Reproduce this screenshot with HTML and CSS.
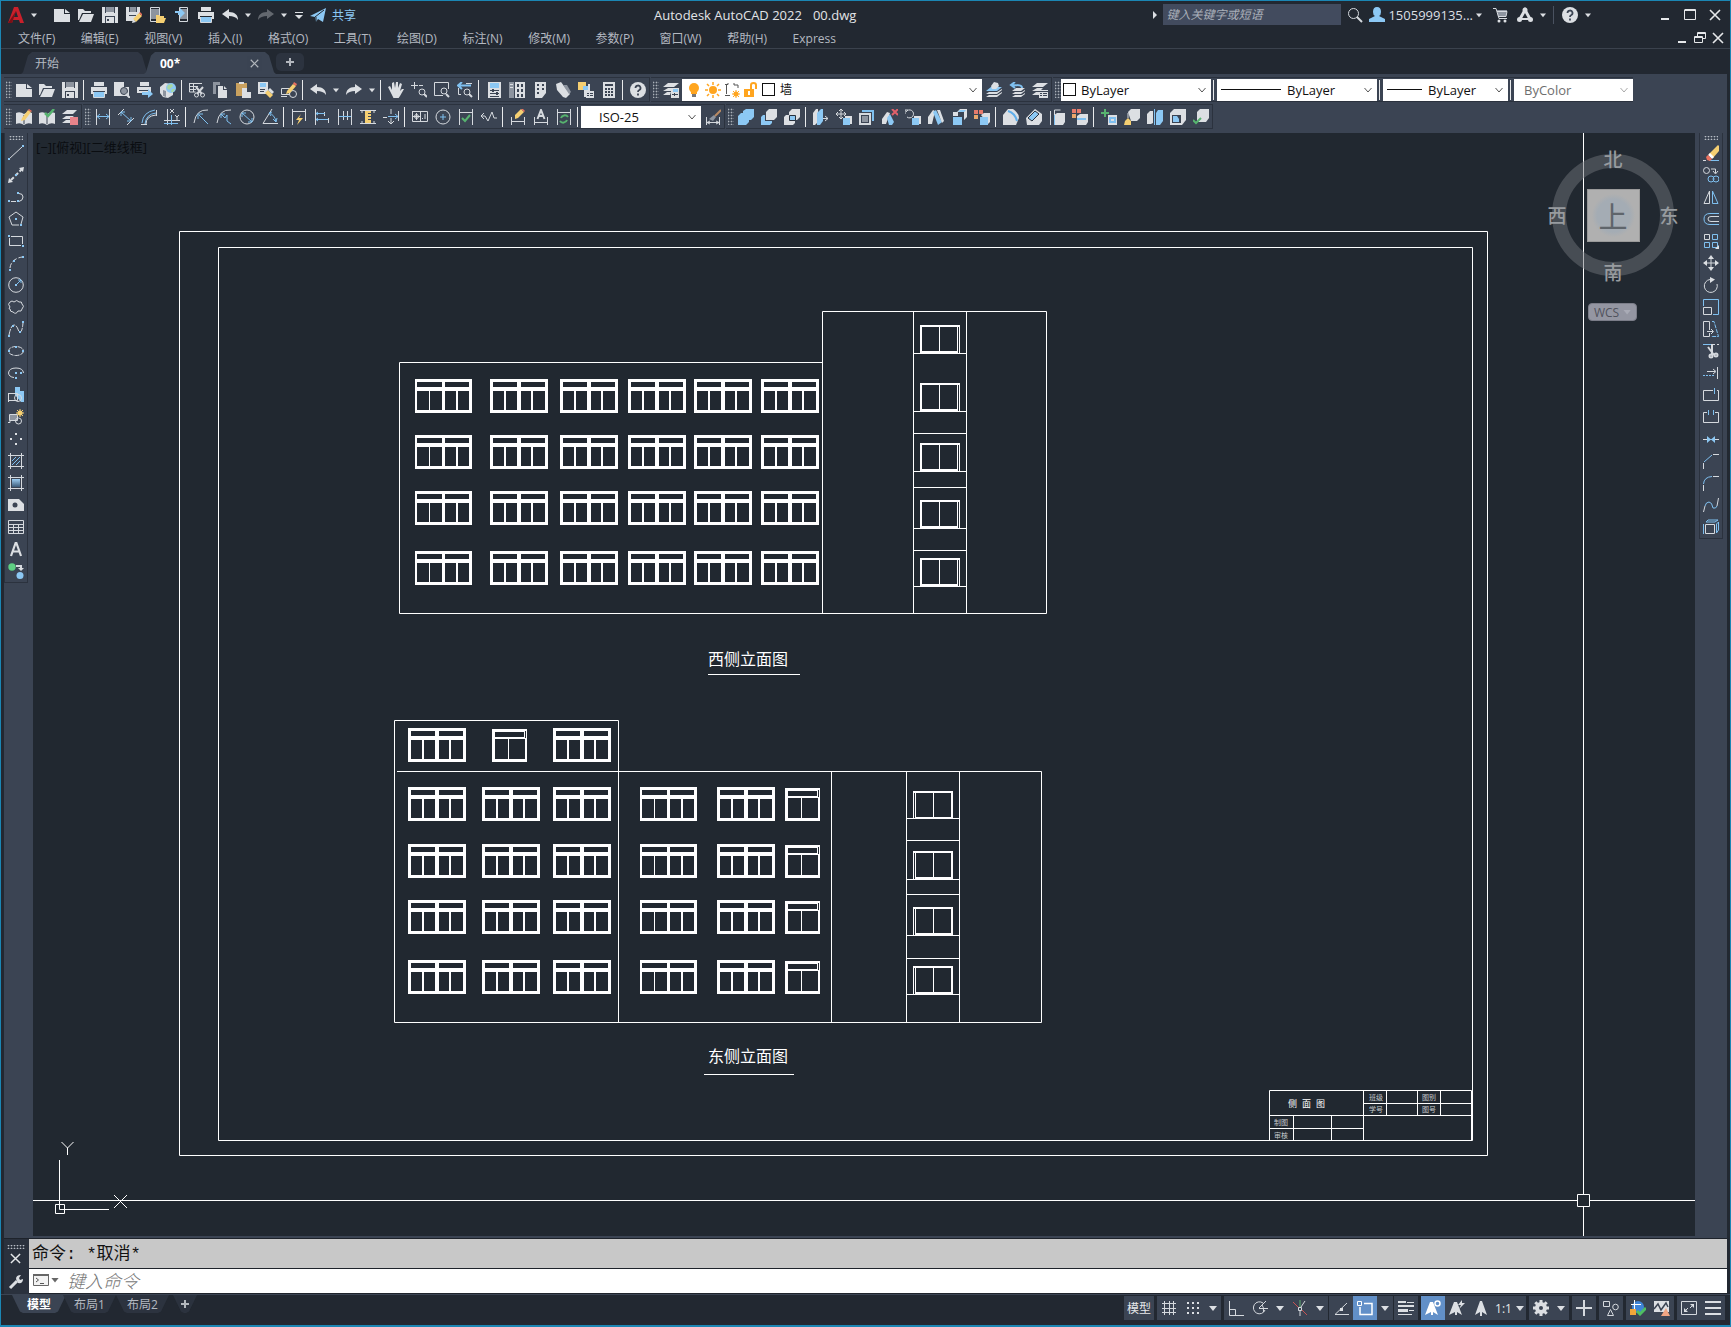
FILE: index.html
```
<!DOCTYPE html>
<html lang="zh-CN">
<head>
<meta charset="utf-8">
<title>Autodesk AutoCAD 2022 - 00.dwg</title>
<link rel="stylesheet" href="styles.css">
</head>
<body>
<svg class="sprite" aria-hidden="true">
<defs>
<!-- files -->
<symbol id="new" viewBox="0 0 16 16"><path class="fw" d="M0 2h10v5h6v8H0z"/><path class="fw" d="M11 2l5 4h-5z"/></symbol>
<symbol id="open" viewBox="0 0 16 16"><path class="fw" d="M0 2h5l2 2h6v2H4L1 13H0z"/><path class="fw" d="M5 7h11l-3 8H1z"/></symbol>
<symbol id="save" viewBox="0 0 16 16"><path class="fw" d="M0 0h16v16H0z"/><path class="fd" d="M3 0h1v6H3zM12 0h1v6h-1zM3 9h10v1H3zM3 9h1v7H3zM12 9h1v7h-1z"/><path class="fg" d="M4 0h8v5H4z"/><path class="fd" d="M5 12h2v2H5z"/></symbol>
<symbol id="saveas" viewBox="0 0 16 16"><path class="fw" d="M0 0h14v6l-6 8H0z"/><path class="fd" d="M3 0h1v5H3zM10 0h1v5h-1zM3 8h7v1H3z"/><path class="fg" d="M4 0h6v5H4z"/><path class="fy" d="M7 12l6-6 3 3-6 6z"/><path class="fr" d="M13 6l1-1 3 3-1 1z"/><path class="fw" d="M7 12l3 3-4 1z"/></symbol>
<symbol id="phoneopen" viewBox="0 0 16 16"><path class="sw" d="M.5.5h9v14h-9z"/><path class="fg" d="M1 2h8v10H1z"/><path class="fy" d="M6 8h3l1 1h4v2h2l-2 5H6z"/></symbol>
<symbol id="phonein" viewBox="0 0 16 16"><path class="sw" d="M5.500.500h8v14h-8z"/><path class="fg" d="M6 2h7v10H6z"/><path class="fb" d="M1 4h5V1l5 5-5 5V8H4V6H1z"/></symbol>
<symbol id="print" viewBox="0 0 16 16"><path class="fw" d="M3 0h10v4H3zM0 5h16v7h-2V9H2v3H0z"/><path class="fb" d="M3 10h10v5H3z"/><path class="sw" d="M2.500 10v5.500h11V10"/></symbol>
<symbol id="preview" viewBox="0 0 16 16"><path class="fw" d="M0 0h10v5h5v9H0z"/><circle class="mag" cx="10" cy="9" r="3.500"/><path class="sw2" d="M12 12l4 4"/></symbol>
<symbol id="publish" viewBox="0 0 16 16"><path class="fw" d="M3 0h9v4H3zM0 5h14v6H0z"/><path class="fd" d="M2 8h10v1H2z"/><path class="fb" d="M5 10h6V7l5 5-5 4v-3H5z"/></symbol>
<symbol id="globe" viewBox="0 0 16 16"><path class="fw" d="M0 5l5-4 8 1v11l-5 3-5-1-3-4z"/><circle cx="11" cy="6" r="5" class="fb"/><path fill="#a9d8a0" d="M8 3l4-1 1 2-2 2-2 2-2-2zM12 7l3 0-2 3-2 0z"/><path class="fg" d="M3 8l3 1v6l-3-1z"/></symbol>
<symbol id="cut" viewBox="0 0 16 16"><path class="sw" d="M.5 1v9h6M0 1.500h13M0 4.500h9M0 7.500h7M4.500 1v9"/><path class="sw2" d="M7 5l6 7M14 5l-6 7"/><circle class="sw" cx="7.500" cy="13" r="2"/><circle class="sw" cx="13.500" cy="13" r="2"/></symbol>
<symbol id="copyclip" viewBox="0 0 16 16"><path class="fg" d="M1 0h7v3H4v9H1z"/><path class="fw" d="M6 4h5v4h4v8H6zM12 4l3 3h-3z"/></symbol>
<symbol id="paste" viewBox="0 0 16 16"><path fill="#c9a15f" d="M1 1h11v13H1z"/><path class="fw" d="M4 0h5v2H4zM7 6h5v4h4v6H7z"/></symbol>
<symbol id="match" viewBox="0 0 16 16"><path class="fw" d="M0 0h10v12H0z"/><path class="fb" d="M2 1h6v4H2z"/><path class="fd" d="M2 7h5v1H2zM2 9h4v1H2z"/><path class="fy" d="M7 11l3-3 5 5-3 3z"/><path class="fw" d="M10 8l2-2 4 4-2 2z"/></symbol>
<symbol id="blockedit" viewBox="0 0 16 16"><path class="sw" d="M.5 6.500h8v6h-8zM0 14.500h6"/><circle class="sw" cx="12" cy="12" r="3.500"/><path class="fy" d="M6 9l6-7 3 2-6 7-4 1z"/><path class="fr" d="M12 2l1-2 3 2-1 2z"/></symbol>
<symbol id="undo" viewBox="0 0 16 16"><path class="fw" d="M0 7l7-5v3c6 0 9 3 9 8-2-3-5-4-9-4v3z"/></symbol>
<symbol id="redo" viewBox="0 0 16 16"><path class="fw" d="M16 7L9 2v3C3 5 0 8 0 13c2-3 5-4 9-4v3z"/></symbol>
<symbol id="dd" viewBox="0 0 8 16"><path class="fw" d="M0 6h8L4 11z"/></symbol>
<symbol id="pan" viewBox="0 0 16 16"><path class="fw" d="M0 5l2-1 2 4V1l2-1 1 6 1-6 2 0 0 6 2-5 2 1-2 7 2-2 2 0-4 7-2 3H6z"/></symbol>
<symbol id="zoom" viewBox="0 0 16 16"><path class="sw" d="M3.500 0v7M0 3.500h7M8 3.500h4"/><circle class="sw" cx="11" cy="10" r="3"/><path class="sw2" d="M13 12l3 3"/></symbol>
<symbol id="zoomwin" viewBox="0 0 16 16"><path class="sw" d="M9 13.500H.500v-13h14V7"/><circle class="sw" cx="10" cy="9" r="3"/><path class="sw2" d="M12 12l3 3"/></symbol>
<symbol id="zoomprev" viewBox="0 0 16 16"><path class="sw" d="M4 12.500h-2.500V6M9 1.500h6"/><path class="sb2" d="M2 3.500h12M5 0L1 3.500 5 7"/><circle class="sw" cx="10" cy="10" r="3"/><path class="sw2" d="M12 12l3 3"/></symbol>
<symbol id="props" viewBox="0 0 16 16"><path class="fw" d="M2 0h13v16H2z"/><path class="fb" d="M4 1h9v5H4z"/><path class="fd" d="M4 8h9v1H4zM4 11h9v1H4zM4 14h9v1H4zM6 7h2v3H6zM10 10h2v3h-2z"/></symbol>
<symbol id="dc" viewBox="0 0 16 16"><path class="fg" d="M0 0h5v16H0z"/><path class="fw" d="M6 0h10v16H6zM1 2h3v1H1zM1 5h3v1H1z"/><path class="fd" d="M8 2h2v3H8zM12 2h2v3h-2zM8 7h2v3H8zM12 7h2v3h-2zM8 12h2v3H8zM12 12h2v3h-2z"/></symbol>
<symbol id="palette" viewBox="0 0 16 16"><path class="fw" d="M3 0h11v11l-4 5H3z"/><path class="fd" d="M5 2h2v2H5zM10 2h2v2h-2zM5 6h2v2H5zM10 6h2v2h-2zM5 10h2v2H5z"/></symbol>
<symbol id="sheets" viewBox="0 0 16 16"><path class="fw" d="M1 2l5-2 9 12-4 4-3-1-6-7z"/><path class="fg" d="M8 3l4 0 4 7-2 2z"/></symbol>
<symbol id="markup" viewBox="0 0 16 16"><path class="fy" d="M0 0h8v8H0z"/><path class="fw" d="M6 6h5v9H6zM10 2h2v7h-2z"/><path class="fb" d="M5 4h5v4H5z"/><path class="fw" d="M8 9h8v7H8z"/><path class="fd" d="M9 11h2v1H9zM12 11h3v1h-3zM9 13h2v1H9zM12 13h3v1h-3z"/></symbol>
<symbol id="calc" viewBox="0 0 16 16"><path class="fw" d="M2 0h12v16H2z"/><path class="fd" d="M4 2h8v2H4zM4 6h2v2H4zM7 6h2v2H7zM10 6h2v2h-2zM4 9h2v2H4zM7 9h2v2H7zM10 9h2v2h-2zM4 12h2v2H4zM7 12h2v2H7zM10 12h2v2h-2z"/></symbol>
<symbol id="help" viewBox="0 0 16 16"><circle class="fw" cx="8" cy="8" r="8"/><path d="M5.500 6a2.500 2.500 0 1 1 3.500 2.300q-1 .5-1 1.700M8 11.500v2" fill="none" stroke="#3b4453" stroke-width="1.800"/></symbol>
<symbol id="layprop" viewBox="0 0 16 16"><path class="fw" d="M0 5l5-4h11l-5 4zM0 9l5-3h6l-3 3zM0 13l4-3h4l-1 3z"/><path class="fw" d="M8 6h8v10H8z"/><path class="fb" d="M10 7h5v3h-5z"/><path class="fd" d="M9 12h6v1H9zM11 11h1v3h-1z"/></symbol>
<symbol id="lay1" viewBox="0 0 16 16"><path class="fb" d="M0 9l5-4h11l-5 4z"/><path class="fw" d="M5 4l3-4 4 1 1 3-3 3-4 0zM0 12l3-2 8 0 5-3v1l-5 4zM0 15l3-2 8 0 5-3v1l-5 4z"/></symbol>
<symbol id="lay2" viewBox="0 0 16 16"><path class="sb2" d="M13 6c0-3-3-3-10-3M6 0L2 3l4 3"/><path class="fw" d="M3 9l4-3h9l-4 3zM3 12l3-2h7l3-2v1l-4 3zM3 15l3-2h7l3-2v1l-4 3z"/></symbol>
<symbol id="lay3" viewBox="0 0 16 16"><path class="fw" d="M0 5l5-4h11l-5 4zM0 9l5-3h6l-3 3zM0 13l4-3h3v3z"/><path class="fw" d="M7 8h9v8H7z"/><path class="fd" d="M7 9h9v1H7zM8 11h2v1H8zM11 11h4v1h-4zM8 13h2v1H8zM11 13h4v1h-4z"/></symbol>
<symbol id="bulb" viewBox="0 0 16 16"><circle cx="8" cy="6" r="5" fill="#ffa51f"/><path fill="#ffa51f" d="M5 9h6v3H5z"/><path fill="#777" d="M6 12h4v3H6z"/></symbol>
<symbol id="sun" viewBox="0 0 16 16"><circle cx="8" cy="8" r="4" fill="#ffa51f"/><path stroke="#ffa51f" stroke-width="1.500" d="M8 0v3M8 13v3M0 8h3M13 8h3M2 2l2 2M12 12l2 2M2 14l2-2M12 4l2-2"/></symbol>
<symbol id="vpfreeze" viewBox="0 0 16 16"><path fill="none" stroke="#555" d="M1 2.500h3V1M10 1v2h4v3M2.500 3v9M1 13.500h5"/><circle cx="12" cy="12" r="2.500" fill="#ffa51f"/><path stroke="#ffa51f" d="M12 8v8M8 12h8M9 9l6 6M9 15l6-6"/></symbol>
<symbol id="lock" viewBox="0 0 16 16"><path fill="#ffa51f" d="M1 7h10v8H1z"/><path fill="none" stroke="#ffa51f" stroke-width="2" d="M8 7V3q0-2 2.500-2T13 3v4"/><path fill="#fff" d="M5 9h2v4H5z"/></symbol>
<symbol id="chev" viewBox="0 0 16 16"><path fill="none" stroke="#555" d="M4.500 6l3.500 4 3.500-4"/></symbol>
<!-- reference editing -->
<symbol id="refedit" viewBox="0 0 16 16"><path class="fw" d="M0 4q4-2 8 1 4-3 8-1v11q-4-2-8 1-4-3-8-1z"/><path class="fd" d="M7.500 6h1v9h-1z"/><path class="fy" d="M6 9l6-8 3 2-6 8-4 1z"/><path class="fr" d="M12 1l1-1 3 2-1 1z"/></symbol>
<symbol id="refsave" viewBox="0 0 16 16"><path class="fw" d="M0 4q4-2 8 1 4-3 8-1v11q-4-2-8 1-4-3-8-1z"/><path class="fd" d="M7.500 6h1v9h-1z"/><path fill="none" stroke="#57b36f" stroke-width="2.500" d="M6 4l3 3 6-7"/></symbol>
<symbol id="refdel" viewBox="0 0 16 16"><path class="fw" d="M0 5l5-4h10l-4 4zM0 10l4-3h8l-4 3zM0 14l4-3h4v3z"/><path fill="#e7838a" d="M8 8h8v8H8z"/></symbol>
<!-- dimensions -->
<symbol id="dlin" viewBox="0 0 16 16"><path class="sw" d="M1.500 0v16M14.500 0v16"/><path class="sb" d="M2 7.500h12M5 5L2 7.500 5 10M11 5l3 2.500-3 2.500"/></symbol>
<symbol id="dali" viewBox="0 0 16 16"><path class="sw" d="M0 6l6-6M9 16l7-7"/><path class="sb" d="M3 3l10 9M3 7V3h4M9 12h4V8"/></symbol>
<symbol id="darc" viewBox="0 0 16 16"><path class="sw" d="M5 15q0-8 10-9M0 15.500h6M15.500 1v6"/><path class="sb" d="M1 14Q2 3 14 1M4 15q1-10 11-11"/></symbol>
<symbol id="dord" viewBox="0 0 16 16"><path class="sw" d="M3.500 0v16M0 11.500h16M6 0l4 4M10 0L6 4M11 6l2 2 2-2M13 8v3"/><path class="sb" d="M7.500 6v10M0 14.500h14"/></symbol>
<symbol id="drad" viewBox="0 0 16 16"><path class="sw" d="M15 1Q3 0 1 14"/><path class="sb" d="M6 6l9 9M5 10V5h5"/></symbol>
<symbol id="djog" viewBox="0 0 16 16"><path class="sw" d="M15 1Q3 0 1 14"/><path class="sb" d="M5 5l4 4 2-3 0 6 4 3M5 9V5h4"/></symbol>
<symbol id="ddia" viewBox="0 0 16 16"><circle class="sw" cx="8" cy="8" r="7"/><path class="sb" d="M3 4l10 9M3 8V4h4M9 13h4V9"/></symbol>
<symbol id="dang" viewBox="0 0 16 16"><path class="sw" d="M10 0L1 14.500h15"/><path class="sb" d="M7 4q6 2 7 9M10 3L7 4l2 3M11 10l3 3 1-4"/></symbol>
<symbol id="dquick" viewBox="0 0 16 16"><path class="sw" d="M1.500 0v16M14.500 0v12M2 2.500h12"/><path class="fy" d="M10 5L5 11h3l-2 5 6-7H8z"/></symbol>
<symbol id="dbase" viewBox="0 0 16 16"><path class="sw" d="M1.500 0v16M10.500 7v-4M14.500 9v5"/><path class="sb" d="M2 4.500h9M2 10.500h12M4 3L2 4.500 4 6M4 9l-2 1.500L4 12"/></symbol>
<symbol id="dcont" viewBox="0 0 16 16"><path class="sw" d="M1.500 0v16M6.500 2v9M10.500 2v9M14.500 0v16"/><path class="sb" d="M2 7.500h12"/></symbol>
<symbol id="dspace" viewBox="0 0 16 16"><path class="sw" d="M0 1.500h16M0 14.500h16M2 1v3M14 1v3M2 12v3M14 12v3"/><path class="fy" d="M5 2h6v12H5z"/><path class="fd" d="M8 4h3v1H8zM8 7h3v1H8zM8 10h3v1H8z"/></symbol>
<symbol id="dbreak" viewBox="0 0 16 16"><path class="sw" d="M8 0v5M8 9v6M5 12l3 3 3-3M15.500 2v10M0 8.500h4"/><path class="sb" d="M5 7.500h10M12 5l3 2.500-3 2.500"/></symbol>
<symbol id="dtol" viewBox="0 0 16 16"><path class="sw" d="M0 2.500h15.500v10H.5v-10M8.500 3v9M10 9.500h1M13 5v5"/><circle class="sw" cx="4.500" cy="7.500" r="2"/><path class="sw" d="M4.500 4v7M1 7.500h7"/></symbol>
<symbol id="dcen" viewBox="0 0 16 16"><circle class="sw" cx="8" cy="8" r="7"/><path class="sb" d="M8 5v6M5 8h6"/></symbol>
<symbol id="dinsp" viewBox="0 0 16 16"><path class="sw" d="M1.500 0v16M14.500 0v16M2 3.500h12"/><path fill="none" stroke="#57b36f" stroke-width="2" d="M4 9l3 3 5-6"/></symbol>
<symbol id="djline" viewBox="0 0 16 16"><path class="sw" d="M0 7h4M3 4L0 7l3 3M4 7l3 5 4-9 2 6h3"/></symbol>
<symbol id="dedit" viewBox="0 0 16 16"><path class="sw" d="M1.500 8v8M14.500 8v8M2 12.500h12"/><path class="fy" d="M5 6l6-6 3 3-6 6-3 1z"/><path class="fr" d="M11 0l1-1 3 3-1 1z"/></symbol>
<symbol id="dtext" viewBox="0 0 16 16"><path class="sw" d="M1.500 8v8M14.500 8v8M2 13.500h12"/><path class="sw2" d="M4.500 10L8 1l3.500 9M6 7h4"/></symbol>
<symbol id="dupd" viewBox="0 0 16 16"><path class="sw" d="M1.500 0v16M14.500 0v16M2 3.500h12"/><path fill="none" stroke="#57b36f" stroke-width="2" d="M12 8a4 4 0 0 0-7 1M4 12a4 4 0 0 0 7-1"/></symbol>
<symbol id="dstyle" viewBox="0 0 16 16"><path class="sw" d="M1.500 8v8M14.500 8v8M2 13.500h12M5 12l-3 1.500L5 15M11 12l3 1.500-3 1.500"/><path class="fg" d="M4 10l5-4 2 2-3 4z"/><path stroke="#b98a62" stroke-width="2" d="M10 7l6-6"/></symbol>
<!-- solids -->
<symbol id="union" viewBox="0 0 16 16"><path class="fb" d="M5 4V2l3-2h8v8l-3 3h-2v2l-3 3H0V7l3-3z"/></symbol>
<symbol id="subtract" viewBox="0 0 16 16"><path class="fw" d="M5 3l3-3h8v8l-3 3H5z"/><path class="fb" d="M0 8l2-2h2v6h7v2l-2 2H0z"/></symbol>
<symbol id="intersect" viewBox="0 0 16 16"><path class="fw" d="M5 3l3-3h8v8l-3 3h-2v3l-2 2H0V8l2-2h3z"/><path class="fb" stroke="#28303c" d="M5.500 6.500h6v5h-6z"/></symbol>
<symbol id="extrude" viewBox="0 0 16 16"><path class="fw" d="M0 4l3-4h2v13l-3 3H0z"/><path class="fb" d="M4 4l4-4h2v12l-3 4H4z"/><path class="sw" d="M10 9.500h5M12 7l3 2.500-3 2.500"/></symbol>
<symbol id="moveface" viewBox="0 0 16 16"><path class="sw" d="M5 0v10M0 5h10M3 2l2-2 2 2M3 8l2 2 2-2M2 3L0 5l2 2M8 3l2 2-2 2"/><path class="fw" d="M9 7h7v8h-2V9H9z"/><path class="fb" d="M7 9h7v7H7z"/></symbol>
<symbol id="offsetface" viewBox="0 0 16 16"><path class="sw2" d="M1 5h10v10H1z"/><path class="fg" d="M3 7h6v6H3z"/><path class="sb2" d="M3 2h11v10"/></symbol>
<symbol id="delface" viewBox="0 0 16 16"><path class="fw" d="M0 10l5-7 3 1-4 11H0z"/><path class="fb" d="M5 9l3-4 4 8-2 3H7z"/><path stroke="#e0606a" stroke-width="2" d="M10 0l6 6M16 0l-6 6"/></symbol>
<symbol id="rotface" viewBox="0 0 16 16"><path class="sw" d="M3 1H0v4M1 3a4 4 0 1 1 1 5"/><path class="fw" d="M9 7h7v8h-2V9H9z"/><path class="fb" d="M7 9h7v7H7z"/></symbol>
<symbol id="taper" viewBox="0 0 16 16"><path class="fw" d="M0 8l5-7 2 1-3 13H0z"/><path class="fb" d="M5 3l3-2 6 12-4 3z"/><path class="fw" d="M9 1h3l4 11-2 2z"/></symbol>
<symbol id="copyface" viewBox="0 0 16 16"><path class="fb" d="M2 8h9v8H2z"/><path class="fw" d="M2 3h5v4H2zM6 3l3-3h7v8l-3 3V3z"/><path class="fb" d="M7 3l2-2h6l-2 2z"/></symbol>
<symbol id="colorface" viewBox="0 0 16 16"><path fill="#e77b6c" d="M0 1h4v4H0zM5 1h4v4H5z"/><path fill="#e9a76c" d="M0 6h4v4H0z"/><path class="fw" d="M7 6l3-2h6v9l-2 2z"/><path class="fb" d="M6 8h8v8H6z"/></symbol>
<symbol id="fillet3" viewBox="0 0 16 16"><path class="fw" d="M0 6l5-6h5q6 4 6 9l-3 7H0z"/><path fill="none" stroke="#5faeea" stroke-width="2" d="M5 2q7 2 9 10"/></symbol>
<symbol id="chamfer3" viewBox="0 0 16 16"><path class="fw" d="M0 9l9-9 7 5v7l-3 4H1z"/><path class="fb" stroke="#28303c" d="M2 9l7-7 4 3-7 7z"/></symbol>
<symbol id="copyedge" viewBox="0 0 16 16"><path class="sw" d="M1.500 2v14M5.500 6V1h6"/><path class="fw" d="M5 6l3-2h8v9l-2 3H5z"/><path class="sb" d="M5.500 6v10"/></symbol>
<symbol id="coloredge" viewBox="0 0 16 16"><path fill="#e77b6c" d="M0 0h4v4H0zM5 0h4v4H5z"/><path fill="#e9a76c" d="M0 5h4v4H0z"/><path class="fw" d="M5 7l3-2h8v8l-2 3H5z"/><path class="sb2" d="M5 10h9"/></symbol>
<symbol id="imprint" viewBox="0 0 16 16"><path fill="none" stroke="#57b36f" stroke-width="2" d="M4 0v8M0 4h8"/><path class="fw" d="M7 6h9v10H7z"/><path class="sb2" d="M9 9h5v4H9z"/></symbol>
<symbol id="clean" viewBox="0 0 16 16"><path class="fw" d="M4 3l3-3h9v9l-3 3H7z"/><path class="fy" d="M1 12l3-3 3 3v4H0z"/><path class="sw" d="M4 9V4"/></symbol>
<symbol id="separate" viewBox="0 0 16 16"><path class="fw" d="M0 5l3-3h3v12l-2 1H0z"/><path class="sb" d="M7.500 0v16"/><path class="fb" d="M9 4l2-3h5v11l-3 4H9z"/></symbol>
<symbol id="shell" viewBox="0 0 16 16"><path class="fw" d="M0 4l4-4h12v11l-4 5H0z"/><path class="fd" d="M2 6h9v8H2z"/><path class="fb" d="M3 7h4l2 3v3H3z"/></symbol>
<symbol id="check3" viewBox="0 0 16 16"><path class="fw" d="M4 3l3-3h9v9l-3 4H4z"/><path fill="none" stroke="#57b36f" stroke-width="2" d="M0 11l3 3 5-5"/></symbol>
<!-- draw -->
<symbol id="line" viewBox="0 0 16 16"><path class="sw" d="M1 14L14 2"/><path class="fb" d="M0 13h2v2H0zM14 0h2v2h-2z"/></symbol>
<symbol id="xline" viewBox="0 0 16 16"><path class="sw2" d="M3 13L14 2" stroke-dasharray="4 2"/><path class="fw" d="M0 16l1-5 4 4zM16 0l-5 1 4 4z"/><path class="fb" d="M7 7h2v2H7z"/></symbol>
<symbol id="pline" viewBox="0 0 16 16"><path class="sw" d="M3 12.500h5M11 4.500q4 0 4 3.500t-4 4.500"/><path class="fb" d="M0 11h2v2H0zM9 3h2v2H9zM9 11h2v2H9z"/></symbol>
<symbol id="polygon" viewBox="0 0 16 16"><path class="sw" d="M11 14H4L1 6l7-5 7 5-2 7"/><path class="fb" d="M7 7h2v2H7zM12 13h2v2h-2z"/></symbol>
<symbol id="rect" viewBox="0 0 16 16"><path class="sw" d="M3 3.500h11.500V11M1.500 5v7.500H13"/><path class="fb" d="M0 2h2v2H0zM14 12h2v2h-2z"/></symbol>
<symbol id="arc" viewBox="0 0 16 16"><path class="sw" d="M2 13Q3 4 14 2" stroke-dasharray="5 2"/><path class="fb" d="M1 14h2v2H1zM5 5h2v2H5zM14 1h2v2h-2z"/></symbol>
<symbol id="circle" viewBox="0 0 16 16"><circle class="sw" cx="8" cy="8" r="7.300"/><path class="sb" d="M9 7l4-4M10 3h3v3"/><path class="fb" d="M7 7h2v2H7z"/></symbol>
<symbol id="cloud" viewBox="0 0 16 16"><path class="sw" d="M2 8Q-1 5 2 3q2-2 4 0 3-3 5 0 3-1 3 2 3 2 0 5 0 3-4 2-2 4-5 1-3 0-3-3-2 0 0-2z"/></symbol>
<symbol id="spline" viewBox="0 0 16 16"><path class="sw" d="M1 14Q3 4 6 4t5 7q3 2 4-9" stroke-dasharray="6 1"/><path class="fb" d="M0 14h2v2H0zM4 4h2v2H4zM11 10h2v2h-2zM14 0h2v2h-2z"/></symbol>
<symbol id="ellipse" viewBox="0 0 16 16"><ellipse class="sw" cx="8" cy="8" rx="7.500" ry="4.500" stroke-dasharray="5 1"/><path class="fb" d="M0 7h2v2H0zM7 3h2v2H7zM14 7h2v2h-2z"/></symbol>
<symbol id="ellarc" viewBox="0 0 16 16"><path class="sw" d="M6 12.500Q1 12 .5 8 1 3 8 3t7.500 5"/><path class="fb" d="M7 7h2v2H7zM7 12h2v2H7zM12 7h2v2h-2z"/></symbol>
<symbol id="insert" viewBox="0 0 16 16"><path class="fb" d="M7 0h5v4h4v11h-3L7 8z"/><path class="sw" d="M.5 6.500h9v7H1M.5 6v9"/><circle class="sw" cx="10" cy="11" r="3.500"/></symbol>
<symbol id="block" viewBox="0 0 16 16"><path class="sw" d="M1.500 5.500h8v6h-8zM0 13.500h2v-2"/><path class="fg" d="M2 6h7v5H2z"/><circle class="sw" cx="10.500" cy="12" r="3"/><circle class="fy" cx="12" cy="4" r="2.500"/><path stroke="#f5cf72" d="M12 0v8M8 4h8M9 1l6 6M15 1L9 7"/></symbol>
<symbol id="point" viewBox="0 0 16 16"><path class="fw" d="M7 2h2v2H7zM2 7h2v2H2zM12 7h2v2h-2zM7 12h2v2H7z"/></symbol>
<symbol id="hatch" viewBox="0 0 16 16"><path class="sw" d="M0 2.500h16M0 13.500h16M2.500 0v16M13.500 0v16"/><path class="sb" d="M4 8l4-4M4 12l8-8M8 12l4-4"/></symbol>
<symbol id="gradient" viewBox="0 0 16 16"><path class="sw" d="M0 2.500h16M0 13.500h16M2.500 0v16M13.500 0v16"/><path fill="url(#gr)" d="M4 4h8v8H4z"/></symbol>
<symbol id="region" viewBox="0 0 16 16"><path class="fw" d="M0 2h11l5 5v7H0z"/><circle class="fd" cx="7" cy="8" r="2.500"/></symbol>
<symbol id="table" viewBox="0 0 16 16"><path class="sw" d="M.5 1.500h15v13H.500zM0 5.500h16M0 8.500h16M0 11.500h16M5.500 5v9M10.500 5v9"/></symbol>
<symbol id="mtext" viewBox="0 0 16 16"><path fill="none" stroke="#dcdfe3" stroke-width="2.200" d="M3 15L7.600 2h.8L13 15M5 10.500h6"/></symbol>
<symbol id="addsel" viewBox="0 0 16 16"><circle cx="4" cy="4" r="3.700" fill="#5fd083"/><circle class="fb" cx="12" cy="12.500" r="3.500"/><path class="sw2" d="M8 3h5v3"/><path class="fw" d="M10 5h6l-3 3z"/></symbol>
<!-- modify -->
<symbol id="erase" viewBox="0 0 16 16"><path class="sb" d="M6 15.500h10"/><path class="sw" d="M0 15.500h3"/><path class="fy" d="M6 9l9-9 1 1v5l-6 7z"/><path fill="#fff" d="M5 10l2-2 4 4-2 2z"/><path class="fr" d="M3 12l2-2 4 4-2 2-3-1z"/></symbol>
<symbol id="copy" viewBox="0 0 16 16"><circle class="sw" cx="3.500" cy="3.500" r="3"/><circle class="sb" cx="8" cy="12" r="3"/><circle class="sb" cx="13" cy="12" r="3"/><path class="sw" d="M8 2h4.500v4M10 4l2.500 3L15 4"/></symbol>
<symbol id="mirror" viewBox="0 0 16 16"><path class="sw" d="M1 14.500L6.500 2v12.500z"/><path class="sb" d="M9.500 14.500V2L15 14.500z"/></symbol>
<symbol id="offset" viewBox="0 0 16 16"><path class="sb" d="M16 2.500H7q-6 0-6 5.500t6 5.500h9"/><path class="sw" d="M16 5.500H8q-3 0-3 2.500t3 2.500h8"/></symbol>
<symbol id="array" viewBox="0 0 16 16"><path class="sw" d="M1.500 1.500h5v5h-5z"/><path class="sb" d="M9.500 1.500h5v5h-5zM1.500 9.500h5v5h-5zM9.500 9.500h5v5h-5z"/><path class="fw" d="M16 12v4h-4z"/></symbol>
<symbol id="move" viewBox="0 0 16 16"><path class="sw" d="M8 2v12M2 8h12"/><path class="fw" d="M8 0l3 4H5zM8 16l3-4H5zM0 8l4-3v6zM16 8l-4-3v6z"/></symbol>
<symbol id="rotate" viewBox="0 0 16 16"><path class="sw" d="M7 2.500a6.500 6.500 0 1 0 7 4.500"/><path class="fw" d="M7 0l5 2.500L7 6z"/></symbol>
<symbol id="scale" viewBox="0 0 16 16"><path class="sb" d="M.5 7V.500h15v15H10"/><path class="sw" d="M.5 8.500h8v7h-8z"/></symbol>
<symbol id="stretch" viewBox="0 0 16 16"><path class="sw" d="M6.500 9V.500h-6v15h6V12M4 10.500h6M8 8l2.500 2.500L8 13"/><path class="sb" d="M9 .5h2l4.500 15H8" stroke-dasharray="4 1"/></symbol>
<symbol id="trim" viewBox="0 0 16 16"><path class="sb" d="M0 1.500h8"/><path class="sw" d="M10 1.500h6" stroke-dasharray="2 2"/><path class="sw2" d="M5 4l6 8M9 1v11"/><circle class="sw2" cx="8" cy="13" r="1.500"/><circle class="sw2" cx="13" cy="12" r="1.500"/></symbol>
<symbol id="extend" viewBox="0 0 16 16"><path class="sw" d="M14.500 2v12M4 6.500h8M10 4l3 2.500L10 9"/><path class="sb" d="M0 10.500h12" stroke-dasharray="2 1"/></symbol>
<symbol id="breakpt" viewBox="0 0 16 16"><path class="sw" d="M10 3.500H.500v10h15v-10H14"/><path class="sb" d="M11.500 1v6"/></symbol>
<symbol id="break" viewBox="0 0 16 16"><path class="sw" d="M4 3.500H.500v10h15v-10H12"/><path class="sb" d="M5.500 1v5M10.500 1v5"/></symbol>
<symbol id="join" viewBox="0 0 16 16"><path class="sw" d="M0 8.500h4M12 8.500h4"/><path class="sb" d="M4 8.500h8"/><path class="fb" d="M4 5l4 3.500L4 12zM12 5L8 8.500l4 3.500z"/></symbol>
<symbol id="chamfer" viewBox="0 0 16 16"><path class="sw" d="M10 1.500h6M.5 10v6"/><path class="sb" d="M1 9l8-7"/></symbol>
<symbol id="fillet" viewBox="0 0 16 16"><path class="sw" d="M10 1.500h6M.5 10v6"/><path class="sb" d="M.5 9Q1 2 9 1.500"/></symbol>
<symbol id="blend" viewBox="0 0 16 16"><path class="sw" d="M.5 15L2 9M15.500 1L14 9"/><path class="sb" d="M2 9q1-4 4-4t4 6q3 1 4-2"/></symbol>
<symbol id="explode" viewBox="0 0 16 16"><path class="sb" d="M.5 15V5M3 3l2-2h10l-3 2zM13.500 14V5l2-2v8z"/><path class="sw" d="M2.500 5.500h9v9h-9z"/></symbol>
<!-- title and status -->
<symbol id="brand" viewBox="0 0 16 16"><path fill="#c9202b" fill-rule="evenodd" d="M0 16L6 0h4l6 16h-4l-1-3H5l-1 3zM6 10h4L8 4z"/><path fill="#7d1017" d="M8 4L5 13 4 16H0z"/></symbol>
<symbol id="custom" viewBox="0 0 8 16"><path class="fw" d="M0 5h8v1H0zM0 8h8l-4 4z"/></symbol>
<symbol id="share" viewBox="0 0 16 16"><path class="fb" d="M0 9L16 1l-3 14-5-3-2 3-1-5z"/><path stroke="#222831" d="M5 10l9-7M6 10v5"/></symbol>
<symbol id="tri" viewBox="0 0 8 16"><path class="fw" d="M2 4l4 4-4 4z"/></symbol>
<symbol id="search" viewBox="0 0 16 16"><circle class="sw" cx="6.500" cy="6.500" r="5"/><path class="sw2" d="M10 10l5 5"/></symbol>
<symbol id="user" viewBox="0 0 16 16"><path class="fb" d="M4 5q0-5 4-5t4 5q0 3-2 4l6 3v3H0v-3l6-3Q4 8 4 5z"/></symbol>
<symbol id="cart" viewBox="0 0 16 16"><path class="fg" d="M4 3h10l-1 7H5z"/><path class="sw" d="M0 1.500h3l3 10h8M4 4.500h10l-1 5H5"/><circle class="fw" cx="6" cy="14" r="1.500"/><circle class="fw" cx="12" cy="14" r="1.500"/></symbol>
<symbol id="store" viewBox="0 0 16 16"><path fill="none" stroke="#dcdfe3" stroke-width="3" d="M3 12L8 3l5 9"/><path fill="none" stroke="#dcdfe3" stroke-width="2" d="M3 12h10"/><circle class="fw" cx="8" cy="3" r="2.500"/><circle class="fw" cx="2.500" cy="12.500" r="2.500"/><circle class="fw" cx="13.500" cy="12.500" r="2.500"/></symbol>
<symbol id="min" viewBox="0 0 12 12"><path fill="#e6e8ea" d="M2 9h8v2H2z"/></symbol>
<symbol id="max" viewBox="0 0 12 12"><path fill="none" stroke="#e6e8ea" d="M.5 1v9.500h11V.500H.5M0 1.500h12"/></symbol>
<symbol id="restore" viewBox="0 0 12 12"><path fill="none" stroke="#e6e8ea" d="M3.500 4V.500h8v6H9M3 1.500h9M.5 4.500h8v6h-8zM0 5.500h9"/></symbol>
<symbol id="close" viewBox="0 0 12 12"><path stroke="#e6e8ea" stroke-width="1.600" d="M1 1l10 10M11 1L1 11"/></symbol>
<symbol id="plus" viewBox="0 0 12 12"><path class="sw2" d="M6 2v8M2 6h8"/></symbol>
<symbol id="wrench" viewBox="0 0 16 16"><path fill="none" stroke="#dcdfe3" stroke-width="3" d="M2 14l7-7"/><path class="fw" d="M8 5q0-4 5-4l-2 3 1 2 3-1q0 5-5 4z"/></symbol>
<symbol id="prompt" viewBox="0 0 16 16"><path fill="#f2f2f2" stroke="#666" d="M.5 2.500h15v11H.500z"/><path fill="#666" d="M0 2h16v2H0z"/><path fill="none" stroke="#555" d="M3 6l2.500 2L3 10M7 11.500h4"/></symbol>
<symbol id="grid" viewBox="0 0 16 16"><path class="sw" d="M3.500 1v14M8.500 1v14M12.500 1v14M1 3.500h14M1 8.500h14M1 12.500h14"/></symbol>
<symbol id="snap" viewBox="0 0 16 16"><path class="fw" d="M2 2h2v2H2zM7 2h2v2H7zM12 2h2v2h-2zM2 7h2v2H2zM7 7h2v2H7zM12 7h2v2h-2zM2 12h2v2H2zM7 12h2v2H7zM12 12h2v2h-2z"/></symbol>
<symbol id="ortho" viewBox="0 0 16 16"><path class="sw" d="M1.500 1v14.500H16M2 9.500h5.500V15"/></symbol>
<symbol id="polar" viewBox="0 0 16 16"><path class="sw" d="M11 3a6 6 0 1 0 2 7M7 8.500h9M7 8l7-7M10 5q2 2 1.500 7"/></symbol>
<symbol id="iso" viewBox="0 0 16 16"><path stroke="#c95353" d="M1 2l6 6M9 9l6 6"/><path stroke="#5fae6e" d="M8 0v7"/><path class="sw" d="M8 10v6M13 1L9 7M6.500 7.500h3v3h-3z"/></symbol>
<symbol id="otrack" viewBox="0 0 16 16"><path class="sw" d="M14 3L2 14.500h14"/><path class="fw" d="M7 8h3v3H7z"/></symbol>
<symbol id="osnap" viewBox="0 0 16 16"><path fill="none" stroke="#fff" stroke-width="1.500" d="M7 3.500h8v11H3V7"/><path fill="none" stroke="#fff" d="M.5 1.500h4v4h-4z"/></symbol>
<symbol id="lwt" viewBox="0 0 16 16"><path class="fw" d="M0 1h8v2H0zM9 2h7v1H9zM0 5h16v2H0zM0 9h10v3H0zM0 14h14v1H0zM11 10h5v1h-5z"/></symbol>
<symbol id="anno" viewBox="0 0 16 16"><path class="fw" d="M7 1h2l5 14-5-3v4H7v-4l-5 3z"/></symbol>
<symbol id="annovis" viewBox="0 0 16 16"><path fill="#fff" d="M5 2h3l5 13-5-3v3H6v-3l-6 3z"/><circle cx="12.500" cy="3.500" r="2.500" fill="#6290c8" stroke="#fff" stroke-width="1.500"/></symbol>
<symbol id="annoauto" viewBox="0 0 16 16"><path class="fw" d="M5 2h3l5 13-5-3v3H6v-3l-6 3z"/><path class="fw" d="M13 0l-4 5h3l-2 4 6-6h-3z"/></symbol>
<symbol id="gear" viewBox="0 0 16 16"><circle cx="8" cy="8" r="4" fill="none" stroke="#dcdfe3" stroke-width="4"/><path stroke="#dcdfe3" stroke-width="3" d="M8 0v3M8 13v3M0 8h3M13 8h3M2.300 2.300l2 2M11.700 11.700l2 2M2.300 13.700l2-2M11.700 4.300l2-2"/></symbol>
<symbol id="addst" viewBox="0 0 16 16"><path class="sw2" d="M8 0v16M0 8h16"/></symbol>
<symbol id="isolate" viewBox="0 0 16 16"><path class="sw" d="M.5 1.500h6v5h-6zM4.500 15.500h6l-3-6z"/><circle class="sw" cx="12.500" cy="7" r="2.800"/></symbol>
<symbol id="hw" viewBox="0 0 16 16"><circle cx="8" cy="7" r="6" fill="#3f84d6"/><path fill="#fff" d="M4 0h1v10H4zM1 4h10v1H1z"/><path fill="#f0a63a" d="M0 9h6v6H0z"/><path fill="none" stroke="#4fbf62" stroke-width="3" d="M7 11l3 3 6-6"/></symbol>
<symbol id="perf" viewBox="0 0 16 16"><path class="fw" d="M0 1h15v11H0z"/><path fill="none" stroke="#3b4453" stroke-width="1.500" d="M0 9l4-5 3 6 5-7 2 4"/><path fill="#f0a583" d="M7 16l5-8 4 8z"/></symbol>
<symbol id="full" viewBox="0 0 16 16"><path class="sw" d="M.5 1.500h15v13H.500z"/><path class="fw" d="M9 4h4v4zM3 12V8l4 4z"/><path class="sw" d="M9 8l3-3M4 11l3-3"/></symbol>
<symbol id="menu" viewBox="0 0 16 16"><path class="fw" d="M0 1h16v2H0zM0 7h16v2H0zM0 13h16v2H0z"/></symbol>
<linearGradient id="gr" x2="0" y2="1"><stop offset="0" stop-color="#9ccdf2"/><stop offset="1" stop-color="#3b5a78"/></linearGradient>
<!-- elevation windows -->
<path id="wa" class="ink" fill-rule="evenodd" d="M0 0h57v34H0zM2 3h25v5H2zM30 3h24v5H30zM2 12h12v19H2zM15 12h12v19H15zM30 12h11v19H30zM43 12h11v19H43z"/>
<path id="wb" class="ink" fill-rule="evenodd" d="M0 0h58v34H0zM3 3h24v5H3zM31 3h24v5H31zM3 12h11v19H3zM16 12h11v19H16zM31 12h10v19H31zM43 12h12v19H43z"/>
<path id="ws" class="ink" fill-rule="evenodd" d="M0 0h35v33H0zM3 3h29v5H3zM33 2h1v7h-1zM3 10h13v20H3zM17 10h16v20H17z"/>
<path id="st" class="ink" fill-rule="evenodd" d="M0 0h40v28H0zM2 2h17v24H2zM20 2h17v24H20zM38 2h1v26h-1z"/>
<path id="se" class="ink" fill-rule="evenodd" d="M0 0h40v28H0zM1 2h1v26H1zM3 2h17v24H3zM21 2h17v24H21z"/>
<g id="row4"><use href="#wa" x="415"/><use href="#wb" x="490"/><use href="#wb" x="560"/><use href="#wb" x="628"/><use href="#wb" x="694"/><use href="#wb" x="761"/></g>
<g id="rowe"><use href="#wb" x="408"/><use href="#wb" x="482"/><use href="#wb" x="553"/><use href="#wa" x="640"/><use href="#wb" x="717"/><use href="#ws" x="785" y="1"/></g>
</defs>
</svg>

<div class="app">
<header class="titlebar">
  <div class="quick">
    <button class="qb logo" aria-label="应用程序菜单"><svg class="ic"><use href="#brand"/></svg></button>
    <button class="dd" aria-label="菜单"><svg><use href="#dd"/></svg></button>
    <button class="qb first" aria-label="新建"><svg class="ic"><use href="#new"/></svg></button>
    <button class="qb" aria-label="打开"><svg class="ic"><use href="#open"/></svg></button>
    <button class="qb" aria-label="保存"><svg class="ic"><use href="#save"/></svg></button>
    <button class="qb" aria-label="另存为"><svg class="ic"><use href="#saveas"/></svg></button>
    <button class="qb" aria-label="从移动设备打开"><svg class="ic"><use href="#phoneopen"/></svg></button>
    <button class="qb" aria-label="保存到移动设备"><svg class="ic"><use href="#phonein"/></svg></button>
    <button class="qb" aria-label="打印"><svg class="ic"><use href="#print"/></svg></button>
    <button class="qb" aria-label="放弃"><svg class="ic"><use href="#undo"/></svg></button>
    <button class="dd" aria-label="放弃列表"><svg><use href="#dd"/></svg></button>
    <button class="qb dim" aria-label="重做"><svg class="ic"><use href="#redo"/></svg></button>
    <button class="dd" aria-label="重做列表"><svg><use href="#dd"/></svg></button>
    <button class="dd cust" aria-label="自定义"><svg><use href="#custom"/></svg></button>
    <button class="sharebtn"><svg class="ic"><use href="#share"/></svg>共享</button>
  </div>
  <div class="apptitle"><span>Autodesk AutoCAD 2022</span><span>00.dwg</span></div>
  <div class="info">
    <svg class="sm"><use href="#tri"/></svg>
    <input class="find" type="text" placeholder="键入关键字或短语" aria-label="键入关键字或短语">
    <button class="qb" aria-label="搜索"><svg class="ic"><use href="#search"/></svg></button>
    <button class="user"><svg class="ic"><use href="#user"/></svg>1505999135...</button>
    <button class="dd" aria-label="用户"><svg><use href="#dd"/></svg></button>
    <button class="qb cartb" aria-label="购物车"><svg class="ic"><use href="#cart"/></svg></button>
    <button class="qb" aria-label="应用"><svg class="ic"><use href="#store"/></svg></button>
    <button class="dd" aria-label="更多"><svg><use href="#dd"/></svg></button>
    <i class="bar"></i>
    <button class="qb" aria-label="帮助"><svg class="ic"><use href="#help"/></svg></button>
    <button class="dd" aria-label="帮助列表"><svg><use href="#dd"/></svg></button>
    <div class="winctl">
      <button aria-label="最小化"><svg><use href="#min"/></svg></button>
      <button aria-label="最大化"><svg><use href="#max"/></svg></button>
      <button aria-label="关闭"><svg><use href="#close"/></svg></button>
    </div>
  </div>
</header>

<nav class="menubar">
  <div class="menus"><button>文件(F)</button><button>编辑(E)</button><button>视图(V)</button><button>插入(I)</button><button>格式(O)</button><button>工具(T)</button><button>绘图(D)</button><button>标注(N)</button><button>修改(M)</button><button>参数(P)</button><button>窗口(W)</button><button>帮助(H)</button><button>Express</button></div>
  <div class="docctl">
    <button aria-label="最小化图形"><svg><use href="#min"/></svg></button>
    <button aria-label="还原图形"><svg><use href="#restore"/></svg></button>
    <button aria-label="关闭图形"><svg><use href="#close"/></svg></button>
  </div>
</nav>

<div class="filetabs">
  <button class="ftab">开始</button>
  <button class="ftab on">00*<svg><use href="#close"/></svg></button>
  <button class="ftab add" aria-label="新图形"><svg><use href="#plus"/></svg></button>
</div>

<div class="toolarea">
  <div class="toolrow">
    <div class="toolbar">
      <i class="grip"></i>
      <button class="tb" aria-label="新建"><svg class="ic"><use href="#new"/></svg></button>
      <button class="tb" aria-label="打开"><svg class="ic"><use href="#open"/></svg></button>
      <button class="tb" aria-label="保存"><svg class="ic"><use href="#save"/></svg></button>
      <i class="sep"></i>
      <button class="tb" aria-label="打印"><svg class="ic"><use href="#print"/></svg></button>
      <button class="tb" aria-label="打印预览"><svg class="ic"><use href="#preview"/></svg></button>
      <button class="tb" aria-label="发布"><svg class="ic"><use href="#publish"/></svg></button>
      <button class="tb" aria-label="三维打印"><svg class="ic"><use href="#globe"/></svg></button>
      <i class="sep"></i>
      <button class="tb" aria-label="剪切"><svg class="ic"><use href="#cut"/></svg></button>
      <button class="tb" aria-label="复制到剪贴板"><svg class="ic"><use href="#copyclip"/></svg></button>
      <button class="tb" aria-label="粘贴"><svg class="ic"><use href="#paste"/></svg></button>
      <button class="tb" aria-label="特性匹配"><svg class="ic"><use href="#match"/></svg></button>
      <button class="tb" aria-label="块编辑器"><svg class="ic"><use href="#blockedit"/></svg></button>
      <i class="sep"></i>
      <button class="tb" aria-label="放弃"><svg class="ic"><use href="#undo"/></svg></button>
      <button class="dd" aria-label="放弃列表"><svg><use href="#dd"/></svg></button>
      <button class="tb" aria-label="重做"><svg class="ic"><use href="#redo"/></svg></button>
      <button class="dd" aria-label="重做列表"><svg><use href="#dd"/></svg></button>
      <i class="sep"></i>
      <button class="tb" aria-label="平移"><svg class="ic"><use href="#pan"/></svg></button>
      <button class="tb" aria-label="实时缩放"><svg class="ic"><use href="#zoom"/></svg></button>
      <button class="tb" aria-label="窗口缩放"><svg class="ic"><use href="#zoomwin"/></svg></button>
      <button class="tb" aria-label="缩放上一个"><svg class="ic"><use href="#zoomprev"/></svg></button>
      <i class="sep"></i>
      <button class="tb" aria-label="特性"><svg class="ic"><use href="#props"/></svg></button>
      <button class="tb" aria-label="设计中心"><svg class="ic"><use href="#dc"/></svg></button>
      <button class="tb" aria-label="工具选项板"><svg class="ic"><use href="#palette"/></svg></button>
      <button class="tb" aria-label="图纸集管理器"><svg class="ic"><use href="#sheets"/></svg></button>
      <button class="tb" aria-label="标记集管理器"><svg class="ic"><use href="#markup"/></svg></button>
      <button class="tb" aria-label="快速计算器"><svg class="ic"><use href="#calc"/></svg></button>
      <i class="sep"></i>
      <button class="tb" aria-label="帮助"><svg class="ic"><use href="#help"/></svg></button>
    </div>
    <div class="toolbar">
      <i class="grip"></i>
      <button class="tb" aria-label="图层特性管理器"><svg class="ic"><use href="#layprop"/></svg></button>
      <div class="combo layer">
        <svg class="ic"><use href="#bulb"/></svg><svg class="ic"><use href="#sun"/></svg><svg class="ic"><use href="#vpfreeze"/></svg><svg class="ic"><use href="#lock"/></svg><i class="swatch"></i>
        <select aria-label="图层"><option>墙</option></select><svg class="ic chev"><use href="#chev"/></svg>
      </div>
      <button class="tb" aria-label="置为当前"><svg class="ic"><use href="#lay1"/></svg></button>
      <button class="tb" aria-label="上一个图层"><svg class="ic"><use href="#lay2"/></svg></button>
      <button class="tb" aria-label="图层状态管理器"><svg class="ic"><use href="#lay3"/></svg></button>
    </div>
    <div class="toolbar props">
      <i class="grip"></i>
      <div class="combo color"><i class="swatch"></i><select aria-label="颜色"><option>ByLayer</option></select><svg class="ic chev"><use href="#chev"/></svg></div>
      <i class="sep"></i>
      <div class="combo ltype"><i class="rule"></i><select aria-label="线型"><option>ByLayer</option></select><svg class="ic chev"><use href="#chev"/></svg></div>
      <i class="sep"></i>
      <div class="combo lweight"><i class="rule"></i><select aria-label="线宽"><option>ByLayer</option></select><svg class="ic chev"><use href="#chev"/></svg></div>
      <i class="sep"></i>
      <div class="combo plot"><select aria-label="打印样式" disabled><option>ByColor</option></select><svg class="ic chev"><use href="#chev"/></svg></div>
    </div>
  </div>
  <div class="toolrow">
    <div class="toolbar">
      <i class="grip"></i>
      <button class="tb" aria-label="在位编辑参照"><svg class="ic"><use href="#refedit"/></svg></button>
      <button class="tb" aria-label="保存参照编辑"><svg class="ic"><use href="#refsave"/></svg></button>
      <button class="tb" aria-label="关闭参照"><svg class="ic"><use href="#refdel"/></svg></button>
    </div>
    <div class="toolbar">
      <i class="grip"></i>
      <button class="tb" aria-label="线性"><svg class="ic"><use href="#dlin"/></svg></button>
      <button class="tb" aria-label="对齐"><svg class="ic"><use href="#dali"/></svg></button>
      <button class="tb" aria-label="弧长"><svg class="ic"><use href="#darc"/></svg></button>
      <button class="tb" aria-label="坐标"><svg class="ic"><use href="#dord"/></svg></button>
      <i class="sep"></i>
      <button class="tb" aria-label="半径"><svg class="ic"><use href="#drad"/></svg></button>
      <button class="tb" aria-label="折弯"><svg class="ic"><use href="#djog"/></svg></button>
      <button class="tb" aria-label="直径"><svg class="ic"><use href="#ddia"/></svg></button>
      <button class="tb" aria-label="角度"><svg class="ic"><use href="#dang"/></svg></button>
      <i class="sep"></i>
      <button class="tb" aria-label="快速标注"><svg class="ic"><use href="#dquick"/></svg></button>
      <button class="tb" aria-label="基线"><svg class="ic"><use href="#dbase"/></svg></button>
      <button class="tb" aria-label="连续"><svg class="ic"><use href="#dcont"/></svg></button>
      <button class="tb" aria-label="等距标注"><svg class="ic"><use href="#dspace"/></svg></button>
      <button class="tb" aria-label="折断标注"><svg class="ic"><use href="#dbreak"/></svg></button>
      <i class="sep"></i>
      <button class="tb" aria-label="公差"><svg class="ic"><use href="#dtol"/></svg></button>
      <button class="tb" aria-label="圆心标记"><svg class="ic"><use href="#dcen"/></svg></button>
      <button class="tb" aria-label="检验"><svg class="ic"><use href="#dinsp"/></svg></button>
      <button class="tb" aria-label="折弯线性"><svg class="ic"><use href="#djline"/></svg></button>
      <i class="sep"></i>
      <button class="tb" aria-label="编辑标注"><svg class="ic"><use href="#dedit"/></svg></button>
      <button class="tb" aria-label="编辑标注文字"><svg class="ic"><use href="#dtext"/></svg></button>
      <button class="tb" aria-label="标注更新"><svg class="ic"><use href="#dupd"/></svg></button>
      <i class="sep"></i>
      <div class="combo dim-style"><select aria-label="标注样式"><option>ISO-25</option></select><svg class="ic chev"><use href="#chev"/></svg></div>
      <button class="tb" aria-label="标注样式管理"><svg class="ic"><use href="#dstyle"/></svg></button>
    </div>
    <div class="toolbar">
      <i class="grip"></i>
      <button class="tb" aria-label="并集"><svg class="ic"><use href="#union"/></svg></button>
      <button class="tb" aria-label="差集"><svg class="ic"><use href="#subtract"/></svg></button>
      <button class="tb" aria-label="交集"><svg class="ic"><use href="#intersect"/></svg></button>
      <i class="sep"></i>
      <button class="tb" aria-label="拉伸面"><svg class="ic"><use href="#extrude"/></svg></button>
      <button class="tb" aria-label="移动面"><svg class="ic"><use href="#moveface"/></svg></button>
      <button class="tb" aria-label="偏移面"><svg class="ic"><use href="#offsetface"/></svg></button>
      <button class="tb" aria-label="删除面"><svg class="ic"><use href="#delface"/></svg></button>
      <button class="tb" aria-label="旋转面"><svg class="ic"><use href="#rotface"/></svg></button>
      <button class="tb" aria-label="倾斜面"><svg class="ic"><use href="#taper"/></svg></button>
      <button class="tb" aria-label="复制面"><svg class="ic"><use href="#copyface"/></svg></button>
      <button class="tb" aria-label="着色面"><svg class="ic"><use href="#colorface"/></svg></button>
      <i class="sep"></i>
      <button class="tb" aria-label="圆角边"><svg class="ic"><use href="#fillet3"/></svg></button>
      <button class="tb" aria-label="倒角边"><svg class="ic"><use href="#chamfer3"/></svg></button>
      <button class="tb" aria-label="复制边"><svg class="ic"><use href="#copyedge"/></svg></button>
      <button class="tb" aria-label="着色边"><svg class="ic"><use href="#coloredge"/></svg></button>
      <i class="sep"></i>
      <button class="tb" aria-label="压印"><svg class="ic"><use href="#imprint"/></svg></button>
      <button class="tb" aria-label="清除"><svg class="ic"><use href="#clean"/></svg></button>
      <button class="tb" aria-label="分割"><svg class="ic"><use href="#separate"/></svg></button>
      <button class="tb" aria-label="抽壳"><svg class="ic"><use href="#shell"/></svg></button>
      <button class="tb" aria-label="检查"><svg class="ic"><use href="#check3"/></svg></button>
    </div>
  </div>
</div>

<div class="work">
  <aside class="dock left"><div class="vbar">
    <i class="hgrip"></i>
    <button class="vb" aria-label="直线"><svg class="ic"><use href="#line"/></svg></button>
    <button class="vb" aria-label="构造线"><svg class="ic"><use href="#xline"/></svg></button>
    <button class="vb" aria-label="多段线"><svg class="ic"><use href="#pline"/></svg></button>
    <button class="vb" aria-label="多边形"><svg class="ic"><use href="#polygon"/></svg></button>
    <button class="vb" aria-label="矩形"><svg class="ic"><use href="#rect"/></svg></button>
    <button class="vb" aria-label="圆弧"><svg class="ic"><use href="#arc"/></svg></button>
    <button class="vb" aria-label="圆"><svg class="ic"><use href="#circle"/></svg></button>
    <button class="vb" aria-label="修订云线"><svg class="ic"><use href="#cloud"/></svg></button>
    <button class="vb" aria-label="样条曲线"><svg class="ic"><use href="#spline"/></svg></button>
    <button class="vb" aria-label="椭圆"><svg class="ic"><use href="#ellipse"/></svg></button>
    <button class="vb" aria-label="椭圆弧"><svg class="ic"><use href="#ellarc"/></svg></button>
    <button class="vb" aria-label="插入块"><svg class="ic"><use href="#insert"/></svg></button>
    <button class="vb" aria-label="创建块"><svg class="ic"><use href="#block"/></svg></button>
    <button class="vb" aria-label="点"><svg class="ic"><use href="#point"/></svg></button>
    <button class="vb" aria-label="图案填充"><svg class="ic"><use href="#hatch"/></svg></button>
    <button class="vb" aria-label="渐变色"><svg class="ic"><use href="#gradient"/></svg></button>
    <button class="vb" aria-label="面域"><svg class="ic"><use href="#region"/></svg></button>
    <button class="vb" aria-label="表格"><svg class="ic"><use href="#table"/></svg></button>
    <button class="vb" aria-label="多行文字"><svg class="ic"><use href="#mtext"/></svg></button>
    <button class="vb" aria-label="添加选定对象"><svg class="ic"><use href="#addsel"/></svg></button>
  </div></aside>

  <main class="canvas">
    <svg class="drawing" role="img" aria-label="侧面图">
      <!-- drawing units start at the window corner; the sheet area begins at 33,133 -->
      <g transform="translate(-33 -133)">
        <text class="vplabel" x="36" y="152">[−][俯视][二维线框]</text>
        <g class="ln">
          <path d="M179.500 231.500h1308v924h-1308zM218.500 247.500h1254v893h-1254z"/>
          <path d="M822.500 362.500h-423v251h647v-302h-224v302M913.500 311v303M966.500 311v303M913 353.500h54M913 411.500h54M913 433.500h54M913 471.500h54M913 487.500h54M913 528.500h54M913 550.500h54M913 586.500h54"/>
          <path d="M394.500 1022.500v-302h224v302M397 771.500h644.500v251h-647M831.500 771v251M906.500 771v251M959.500 771v251M906 818.500h54M906 840.500h54M906 879.500h54M906 894.500h54M906 935.500h54M906 958.500h54M906 994.500h54"/>
          <path d="M708 674.500h92M704 1074.500h90"/>
          <path d="M1269.500 1140.500v-50h202v50zM1269 1115.500h203M1363.500 1090v50M1269 1128.500h94M1293.500 1115v25M1331.500 1115v25M1363 1103.500h109M1386.500 1090v25M1417.500 1090v25M1440.500 1090v25"/>
        </g>
        <use href="#row4" y="379"/><use href="#row4" y="435"/><use href="#row4" y="491"/><use href="#row4" y="551"/>
        <use href="#st" x="920" y="325"/><use href="#st" x="920" y="383"/><use href="#st" x="920" y="443"/><use href="#st" x="920" y="500"/><use href="#st" x="920" y="558"/>
        <use href="#wb" x="408" y="728"/><use href="#ws" x="492" y="729"/><use href="#wb" x="553" y="728"/>
        <use href="#rowe" y="787"/><use href="#rowe" y="844"/><use href="#rowe" y="900"/><use href="#rowe" y="960"/>
        <use href="#se" x="913" y="791"/><use href="#se" x="913" y="851"/><use href="#se" x="913" y="907"/><use href="#se" x="913" y="966"/>
        <text class="cap" x="708" y="665">西侧立面图</text>
        <text class="cap" x="708" y="1062">东侧立面图</text>
        <text class="tt" x="1288 1302 1316" y="1107">侧面图</text>
        <g class="ts"><text x="1369" y="1100">班级</text><text x="1369" y="1112">学号</text><text x="1422" y="1100">图别</text><text x="1422" y="1112">图号</text><text x="1274" y="1125">制图</text><text x="1274" y="1138">审核</text></g>
        <!-- UCS marker -->
        <g class="ln"><path d="M59.500 1160v49.500H109M55.500 1204.500h9v9h-9zM67.500 1155v-7l-6-6M67.500 1148l6-6M114 1195l13 13M127 1195l-13 13"/></g>
      </g>
      <path class="ln" d="M0 1067.500h1544M1557 1067.500h200M1550.500 0v1061M1550.500 1074v60M1544.500 1061.500h12v12h-12z"/>
    </svg>
    <div class="viewcube">
      <i class="ring"></i>
      <button class="n">北</button><button class="w">西</button><button class="face">上</button><button class="e">东</button><button class="s">南</button>
    </div>
    <button class="wcs">WCS <i></i></button>
  </main>

  <aside class="dock right"><div class="vbar">
    <i class="hgrip"></i>
    <button class="vb" aria-label="删除"><svg class="ic"><use href="#erase"/></svg></button>
    <button class="vb" aria-label="复制"><svg class="ic"><use href="#copy"/></svg></button>
    <button class="vb" aria-label="镜像"><svg class="ic"><use href="#mirror"/></svg></button>
    <button class="vb" aria-label="偏移"><svg class="ic"><use href="#offset"/></svg></button>
    <button class="vb" aria-label="阵列"><svg class="ic"><use href="#array"/></svg></button>
    <button class="vb" aria-label="移动"><svg class="ic"><use href="#move"/></svg></button>
    <button class="vb" aria-label="旋转"><svg class="ic"><use href="#rotate"/></svg></button>
    <button class="vb" aria-label="缩放"><svg class="ic"><use href="#scale"/></svg></button>
    <button class="vb" aria-label="拉伸"><svg class="ic"><use href="#stretch"/></svg></button>
    <button class="vb" aria-label="修剪"><svg class="ic"><use href="#trim"/></svg></button>
    <button class="vb" aria-label="延伸"><svg class="ic"><use href="#extend"/></svg></button>
    <button class="vb" aria-label="打断于点"><svg class="ic"><use href="#breakpt"/></svg></button>
    <button class="vb" aria-label="打断"><svg class="ic"><use href="#break"/></svg></button>
    <button class="vb" aria-label="合并"><svg class="ic"><use href="#join"/></svg></button>
    <button class="vb" aria-label="倒角"><svg class="ic"><use href="#chamfer"/></svg></button>
    <button class="vb" aria-label="圆角"><svg class="ic"><use href="#fillet"/></svg></button>
    <button class="vb" aria-label="光顺曲线"><svg class="ic"><use href="#blend"/></svg></button>
    <button class="vb" aria-label="分解"><svg class="ic"><use href="#explode"/></svg></button>
  </div></aside>
</div>

<section class="command">
  <div class="cmdside">
    <i class="hgrip"></i>
    <button aria-label="关闭命令行"><svg class="x"><use href="#close"/></svg></button>
    <button aria-label="自定义命令行"><svg class="ic"><use href="#wrench"/></svg></button>
  </div>
  <div class="cmdmain">
    <div class="history">命令: *取消*</div>
    <label class="entry"><svg class="ic"><use href="#prompt"/></svg><i class="arrow"></i><input type="text" placeholder="键入命令" aria-label="键入命令"></label>
  </div>
</section>

<footer class="status">
  <div class="layouts">
    <button class="ltab on">模型</button><button class="ltab">布局1</button><button class="ltab">布局2</button><button class="ltab add" aria-label="新布局"><svg><use href="#plus"/></svg></button>
  </div>
  <div class="stgroups">
    <div class="sg"><button class="txt model">模型</button></div>
    <div class="sg"><button class="sb1" aria-label="栅格"><svg class="ic"><use href="#grid"/></svg></button><button class="sb1" aria-label="捕捉"><svg class="ic"><use href="#snap"/></svg></button><button class="sdd" aria-label="捕捉列表"><svg><use href="#dd"/></svg></button></div>
    <div class="tight">
      <div class="sg"><button class="sb1" aria-label="正交"><svg class="ic"><use href="#ortho"/></svg></button><button class="sb1" aria-label="极轴"><svg class="ic"><use href="#polar"/></svg></button><button class="sdd" aria-label="极轴列表"><svg><use href="#dd"/></svg></button><button class="sb1" aria-label="等轴测"><svg class="ic"><use href="#iso"/></svg></button><button class="sdd" aria-label="等轴测列表"><svg><use href="#dd"/></svg></button></div>
      <div class="sg"><button class="sb1" aria-label="对象捕捉追踪"><svg class="ic"><use href="#otrack"/></svg></button><button class="sb1 act" aria-label="对象捕捉"><svg class="ic"><use href="#osnap"/></svg></button><button class="sdd" aria-label="对象捕捉列表"><svg><use href="#dd"/></svg></button></div>
      <div class="sg"><button class="sb1" aria-label="线宽"><svg class="ic"><use href="#lwt"/></svg></button></div>
    </div>
    <div class="sg"><button class="sb1 act" aria-label="注释可见性"><svg class="ic"><use href="#annovis"/></svg></button><button class="sb1" aria-label="自动缩放"><svg class="ic"><use href="#annoauto"/></svg></button><button class="sb1" aria-label="注释比例"><svg class="ic"><use href="#anno"/></svg></button><button class="txt ratio">1:1<svg><use href="#dd"/></svg></button></div>
    <div class="sg"><button class="sb1" aria-label="工作空间"><svg class="ic"><use href="#gear"/></svg></button><button class="sdd" aria-label="工作空间列表"><svg><use href="#dd"/></svg></button></div>
    <div class="sg"><button class="sb1" aria-label="注释监视器"><svg class="ic"><use href="#addst"/></svg></button></div>
    <div class="sg"><button class="sb1" aria-label="隔离对象"><svg class="ic"><use href="#isolate"/></svg></button></div>
    <div class="sg"><button class="sb1" aria-label="硬件加速"><svg class="ic"><use href="#hw"/></svg></button><button class="sb1" aria-label="性能"><svg class="ic"><use href="#perf"/></svg></button></div>
    <div class="sg"><button class="sb1" aria-label="全屏显示"><svg class="ic"><use href="#full"/></svg></button><button class="sb1" aria-label="自定义"><svg class="ic"><use href="#menu"/></svg></button></div>
  </div>
</footer>
</div>
</body>
</html>
```
FILE: styles.css
```
* { box-sizing: border-box; }
body {
  margin: 0;
  background: #222831;
  color: #dcdfe3;
  font-family: "Open Sans", "Noto Sans CJK SC", sans-serif;
  font-size: 12px;
}
button, input, select { font: inherit; color: inherit; margin: 0; padding: 0; border: 0; background: none; border-radius: 0; }
button { display: flex; align-items: center; justify-content: center; white-space: nowrap; }
svg { display: block; flex: none; }
i { display: block; flex: none; font-style: normal; }
.sprite { position: absolute; width: 0; height: 0; }
.ic { width: 16px; height: 16px; }

/* icon paint */
.fw { fill: #dcdfe3; }
.fb { fill: #8cc8f4; }
.fg { fill: #8d949f; }
.fd { fill: #3b4453; }
.fy { fill: #f5cf72; }
.fr { fill: #e8705f; }
.sw { fill: none; stroke: #d5d9de; }
.sw2 { fill: none; stroke: #d5d9de; stroke-width: 2; }
.sb { fill: none; stroke: #7fc0f0; }
.sb2 { fill: none; stroke: #7fc0f0; stroke-width: 2; }
.mag { fill: #8d949f; stroke: #3b4453; }
.ink { fill: #fff; }

.app {
  min-height: 100vh;
  display: flex;
  flex-direction: column;
  border: solid #1b86b4;
  border-width: 1px 1px 2px;
}

/* title bar */
.titlebar { display: flex; align-items: center; height: 27px; justify-content: space-between; position: relative; }
.quick, .info { display: flex; align-items: center; }
.qb { width: 24px; height: 24px; }
.dd { width: 12px; height: 22px; }
.dd svg { width: 6px; height: 12px; }
.toolbar .dd { width: 13px; }
.logo { margin-left: 3px; }
.dd + .first { margin-left: 10px; }
.dim { opacity: .35; }
.cust { width: 18px; }
.cust svg { width: 8px; height: 16px; }
.sharebtn { gap: 6px; color: #8cc8f4; margin-left: 2px; }
.apptitle {
  position: absolute;
  left: 653px;
  display: flex;
  gap: 11px;
  font-size: 13px;
  color: #e2e4e7;
}
.info { margin-right: 9px; }
.sm { width: 8px; height: 16px; margin-right: 4px; }
.find { width: 178px; height: 21px; background: #424b5e; padding: 0 3px; font-style: italic; margin-right: 2px; }
.find::placeholder, .entry input::placeholder { color: inherit; opacity: 1; }
.find { color: #aab0ba; }
.user { gap: 3px; font-size: 13px; margin-left: 2px; }
.cartb { margin-left: 4px; }
.bar { width: 1px; height: 18px; background: #4a5260; margin: 0 4px; }
.winctl { display: flex; gap: 13px; margin-left: 65px; }
.winctl svg, .docctl svg { width: 12px; height: 12px; }
.menubar { display: flex; align-items: center; justify-content: space-between; height: 21px; padding: 0 6px 0 17px; color: #b4b9c1; border-bottom: 1px solid #3b424d; }
.menus { display: flex; flex: 0 1 818px; justify-content: space-between; }
.docctl { display: flex; gap: 6px; }

/* file tabs */
.filetabs { display: flex; align-items: flex-end; height: 25px; padding-left: 20px; }
.ftab {
  width: 128px;
  height: 22px;
  padding: 0 14px;
  justify-content: flex-start;
  background: #2f3643;
  color: #b4b9c1;
  clip-path: polygon(0 100%, 2px 92%, 7px 16%, 11px 0, calc(100% - 11px) 0, calc(100% - 7px) 16%, calc(100% - 2px) 92%, 100% 100%);
}
.ftab.on { width: 132px; margin-left: -5px; background: #3b4453; color: #fff; font-weight: 700; justify-content: space-between; padding-left: 16px; padding-right: 17px; }
.ftab.on svg { width: 9px; height: 9px; opacity: .7; }
.ftab.add { width: 28px; height: 18px; margin: 0 0 3px; padding: 0; justify-content: center; background: #2c333f; clip-path: none; border-radius: 5px; }
.ftab.add svg, .ltab.add svg { width: 12px; height: 12px; opacity: .8; }

/* toolbars */
.toolarea { background: #3b4453; padding: 3px 3px 4px; display: flex; flex-direction: column; gap: 2px; border-right: 3px solid #222831; }
.toolrow { display: flex; gap: 1px; }
.toolbar { display: flex; align-items: center; height: 25px; border: solid #2b323e; border-width: 1px 1px 1px 0; }
.grip {
  width: 8px;
  height: 17px;
  background: radial-gradient(circle, #aab0b9 40%, transparent 50%) 2px 0 / 3px 3px repeat;
  border-left: 2px solid #3b4453;
}
.tb { width: 23px; height: 23px; padding: 0 3px 0 4px; }
.sep { width: 6px; height: 20px; background: linear-gradient(#e8eaec, #e8eaec) 2px 0 / 1px 100% no-repeat; }
.combo { display: flex; align-items: center; height: 22px; background: #fff; color: #111; font-size: 13px; padding: 0 1px 0 4px; }
.combo select { appearance: none; flex: 1; min-width: 0; outline: 0; opacity: 1; }
.layer { width: 300px; gap: 3px; }
.layer .swatch { margin-right: 2px; }
.layer select { font-size: 12px; }
.swatch { width: 13px; height: 13px; border: 1px solid #111; background: #fff; margin-right: 5px; }
.rule { height: 1px; background: #111; margin-right: 6px; }
.color { width: 150px; padding-left: 2px; }
.ltype { width: 160px; }
.ltype .rule { width: 60px; }
.lweight { width: 125px; }
.lweight .rule { width: 35px; }
.plot { width: 119px; padding-left: 10px; color: #6e6e6e; }
.plot select { color: #6e6e6e; }
.plot .chev { opacity: .5; }
.props { border-right: 0; }
.dim-style { width: 120px; padding-left: 18px; }

/* work area */
.work { display: flex; flex: 1; min-height: 700px; }
.dock { background: #3b4453; }
.dock.left { width: 32px; border-left: 3px solid #222831; }
.dock.right { width: 35px; padding-left: 4px; border-right: 3px solid #222831; }
.vbar { width: 24px; display: flex; flex-direction: column; align-items: center; border: 1px solid #2b323e; border-top: 0; }
.vb { width: 22px; height: 22px; }
.hgrip { width: 14px; height: 9px; background: radial-gradient(circle, #b9bec6 40%, transparent 50%) 0 2px / 3px 3px; background-clip: content-box; padding: 3px 0 2px; }
.canvas { flex: 1; position: relative; overflow: hidden; background: #212830; }
.drawing { position: absolute; inset: 0; width: 100%; height: 100%; }
.ln, .ln path { fill: none; stroke: #fff; }
.vplabel { font-size: 13px; fill: #0a0d11; }
.cap { font-family: "Noto Sans CJK SC", sans-serif; font-size: 16px; fill: #fff; }
.tt { font-family: "Noto Sans CJK SC", sans-serif; font-size: 9px; fill: #fff; }
.ts { font-family: "Noto Sans CJK SC", sans-serif; font-size: 7px; fill: #c4c8cc; }

/* view navigation overlays the drawing */
.viewcube {
  position: absolute;
  top: 13px;
  right: 15px;
  width: 134px;
  height: 140px;
  display: grid;
  grid-template: 26px 86px 28px / 22px 90px 22px;
  place-items: center;
  font-family: "Noto Sans CJK SC", sans-serif;
  font-size: 19px;
  font-weight: 500;
  color: #979b9f;
}
.ring { position: absolute; left: 6px; top: 8px; width: 122px; height: 122px; border: 14px solid rgba(110, 114, 120, .5); border-radius: 50%; }
.viewcube button { position: relative; line-height: 20px; }
.viewcube .n { grid-area: 1 / 2; }
.viewcube .w { grid-area: 2 / 1; }
.viewcube .e { grid-area: 2 / 3; }
.viewcube .s { grid-area: 3 / 2; }
.viewcube .face { grid-area: 2 / 2; width: 53px; height: 53px; background: radial-gradient(#a4acb4 45%, #b0b0b0 60%); color: #5f656b; font-size: 29px; font-weight: 400; border: 1px solid #9a9a9a; }
.wcs { position: absolute; right: 58px; top: 170px; width: 49px; height: 18px; border-radius: 4px; background: #9496a2; border: 1px solid #7b7d88; color: #50525c; gap: 4px; }
.wcs i { width: 8px; height: 5px; background: #a9abb6; clip-path: polygon(0 0, 100% 0, 50% 100%); }

/* command line */
.command { display: flex; margin: 0 3px; border-top: 2px solid #3b4453; }
.cmdside { width: 25px; background: #2a313d; display: flex; flex-direction: column; align-items: center; padding: 3px 2px 0 0; border-top: 1px solid #1e232b; }
.cmdside .hgrip { width: 18px; }
.x { width: 11px; height: 11px; margin: 2px 0 10px; }
.cmdmain { flex: 1; border-top: 1px solid #1e232b; border-bottom: 1px solid #1e232b; }
.history { height: 30px; line-height: 26px; padding: 3px 0 0 3px; background: #c8c8c8; color: #111; border-bottom: 1px solid #1e232b; font-family: "Liberation Mono", "Noto Sans CJK SC", monospace; font-size: 17px; }
.entry { display: flex; align-items: center; height: 24px; background: #fff; padding: 0 0 2px 4px; }
.arrow { width: 8px; height: 5px; margin: 0 8px 0 2px; background: #666; clip-path: polygon(0 0, 100% 0, 50% 100%); }
.entry input { flex: 1; font-family: "Noto Sans CJK SC", sans-serif; font-weight: 300; font-style: italic; font-size: 18px; height: 22px; line-height: 22px; color: #777; outline: 0; }

/* status bar */
.status { display: flex; justify-content: space-between; height: 31px; border-top: 1px solid #3b4453; }
.layouts { display: flex; padding-left: 11px; }
.ltab { width: 53px; height: 18px; background: #2c333f; color: #b4b9c1; clip-path: polygon(0 0, 100% 0, calc(100% - 8px) 92%, calc(100% - 11px) 100%, 11px 100%, 8px 92%); }
.ltab.on { width: 54px; background: #3b4453; color: #fff; font-weight: 700; }
.ltab.on + .ltab { margin-left: -3px; }
.ltab.add { width: 24px; margin-left: 4px; }
.stgroups { display: flex; gap: 3px; padding: 1px 5px 0 0; }
.tight { display: flex; gap: 1px; }
.sg { display: flex; height: 24px; background: #3b4453; }
.sb1 { width: 24px; height: 24px; }
.sdd { width: 16px; height: 24px; }
.sdd svg, .ratio svg { width: 8px; height: 16px; }
.act { background: #6290c8; }
.txt { height: 24px; color: #e6e8ea; }
.model { width: 30px; }
.ratio { width: 33px; gap: 4px; }
```
